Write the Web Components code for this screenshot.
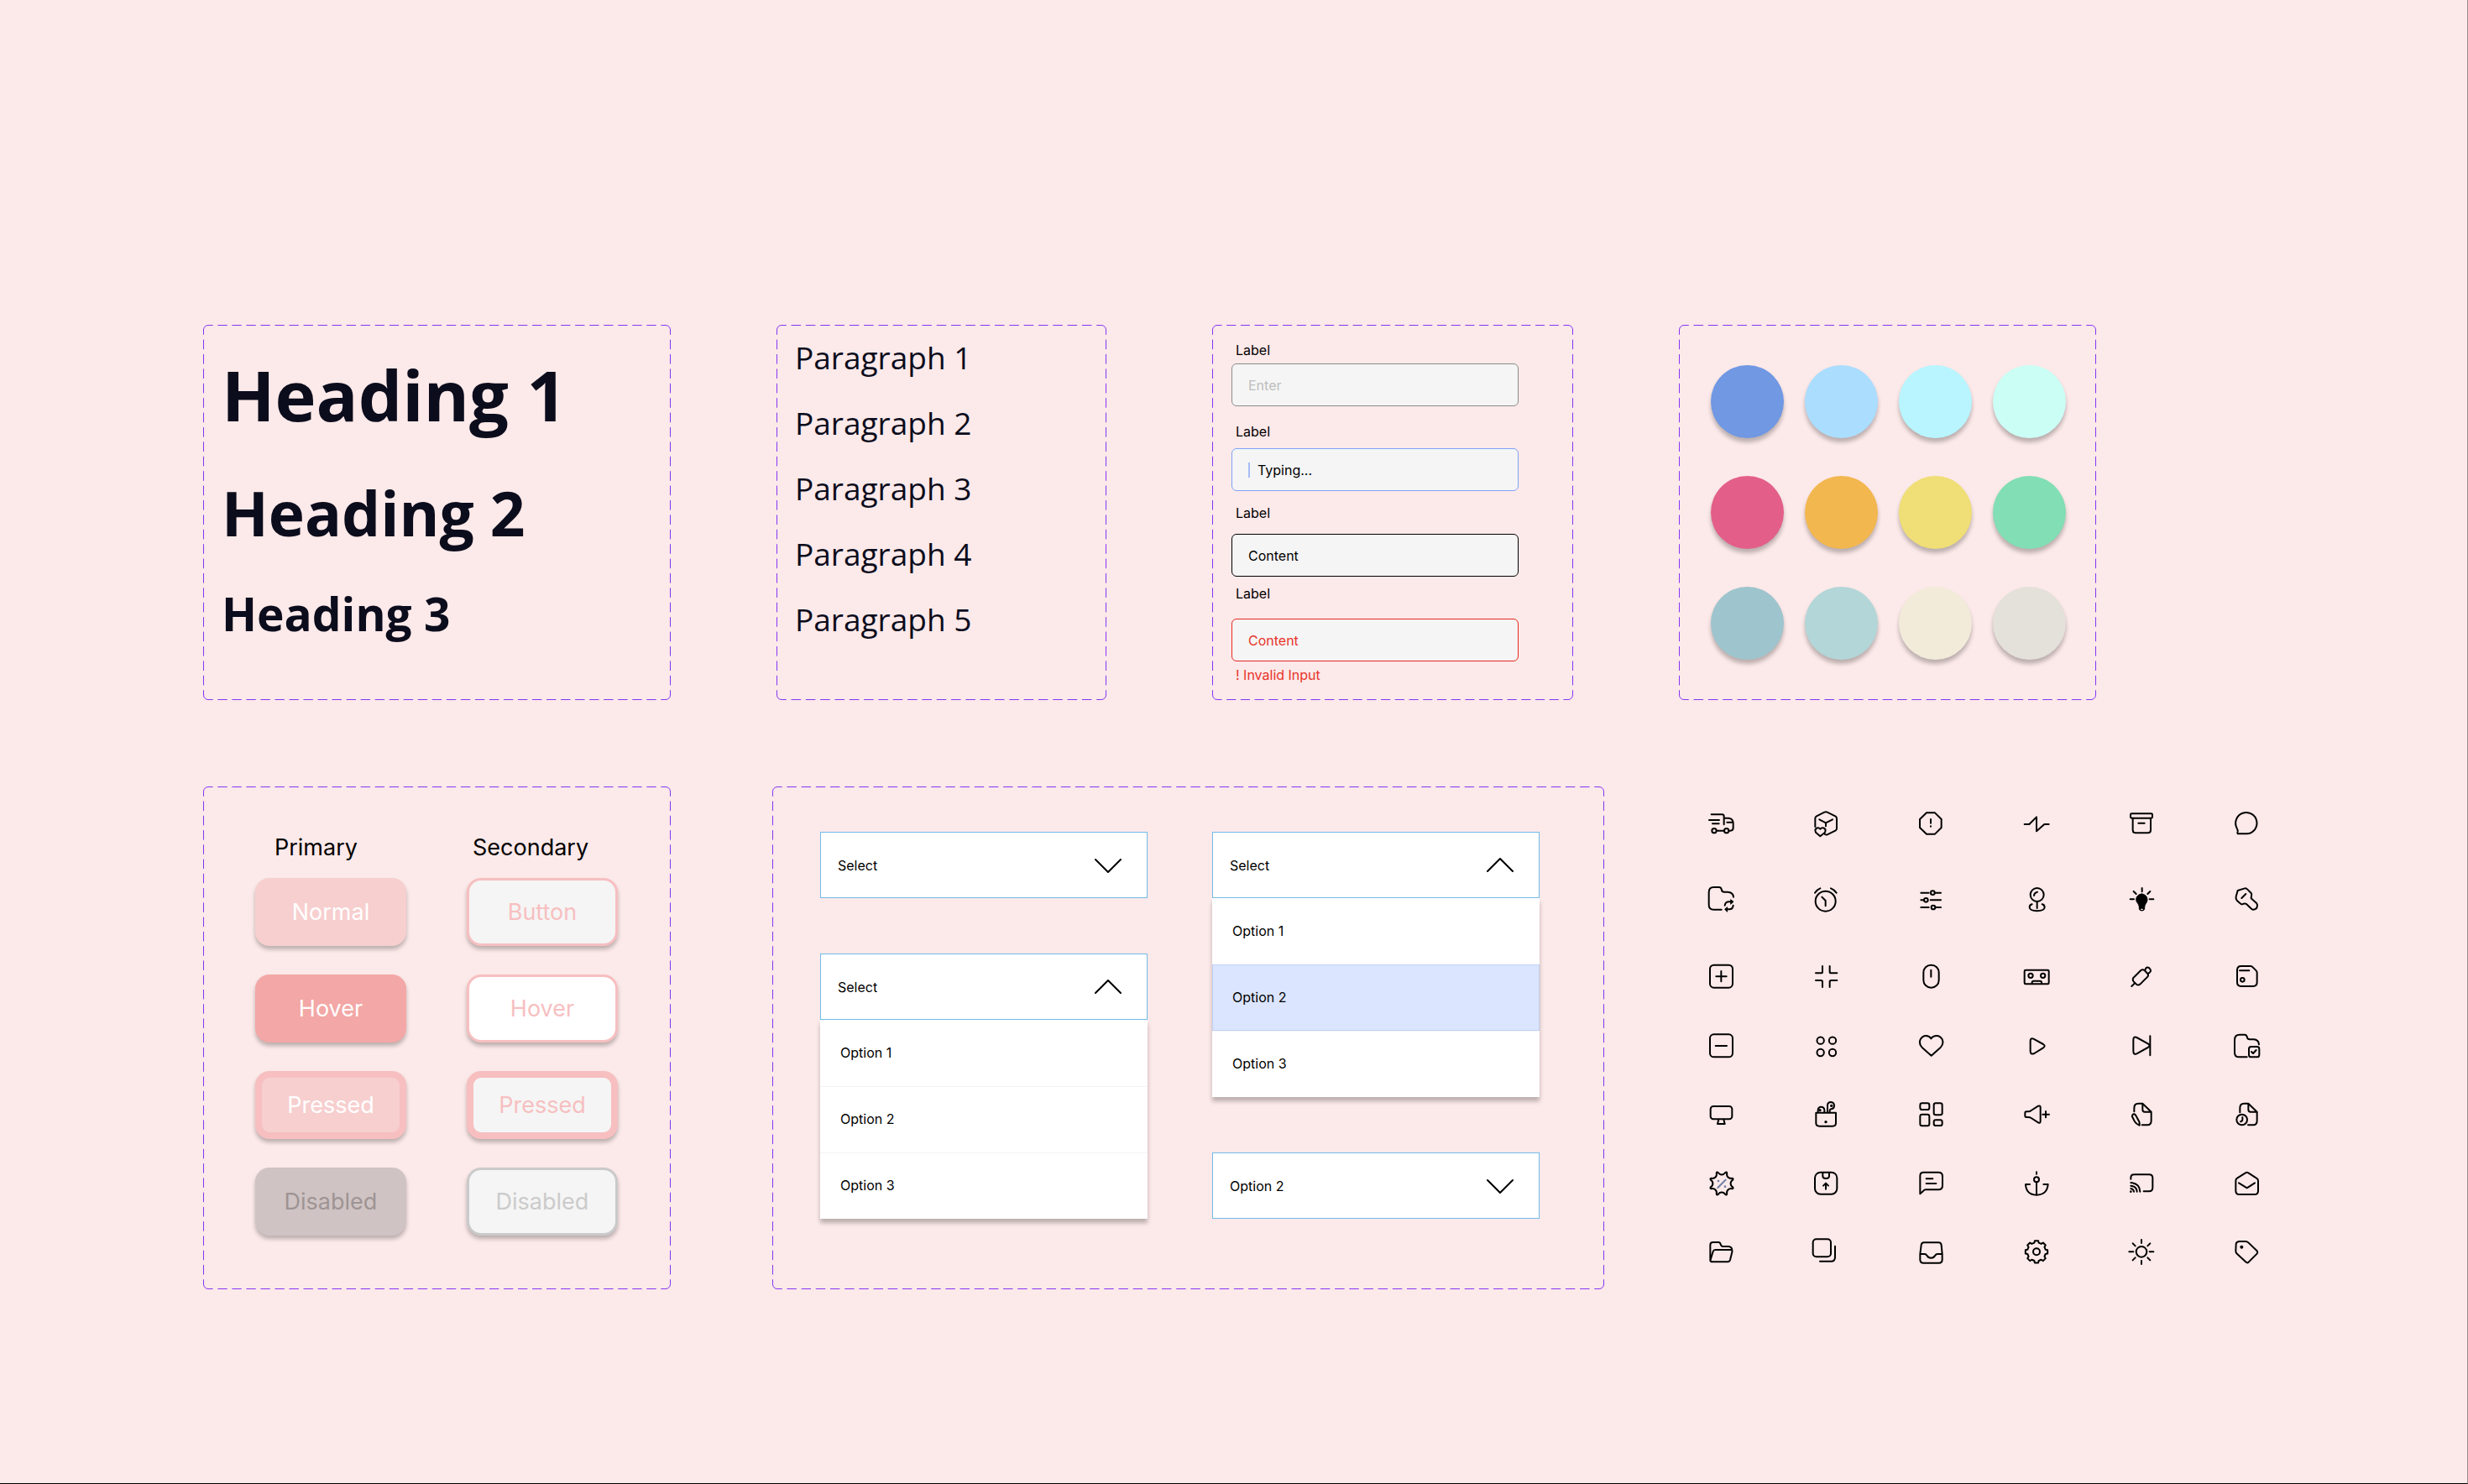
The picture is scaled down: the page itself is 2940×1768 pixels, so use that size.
<!DOCTYPE html>
<html lang="en">
<head>
<meta charset="utf-8">
<title>Style guide</title>
<style>
  html { background: #fce9e9; }
  body {
    margin: 0; box-sizing: border-box; min-height: 100vh;
    background: #fce9e9; border-right: 1px solid #978c8c; border-bottom: 1px solid #000;
    font-family: Inter, "Liberation Sans", sans-serif; color: #000;
  }
</style>
</head>
<body>
<style-guide></style-guide>
<script>
const define = (name, html, setup) => {
  const tpl = document.createElement('template');
  tpl.innerHTML = html;
  customElements.define(name, class extends HTMLElement {
    constructor() {
      super();
      this.attachShadow({ mode: 'open' }).append(tpl.content.cloneNode(true));
    }
    connectedCallback() { if (setup) setup(this, this.shadowRoot); }
  });
};

/* Panel with a dashed frame; cols/rows give the number of dashes on each side. */
define('dashed-panel', `
<style>
  :host { display: grid; grid-template: 6px 1fr 6px / 6px 1fr 6px; min-width: 0; }
  svg { display: block; width: 100%; height: 100%; fill: none; stroke: #8436f5; }
  .body { min-width: 0; }
</style>
<svg><path d="M.5 6A5.500 5.500 0 0 1 6 .5"/></svg>
<svg class="h"><line x1="0" x2="100%" y1=".5" y2=".5"/></svg>
<svg><path d="M0 .5A5.500 5.500 0 0 1 5.500 6"/></svg>
<svg class="v"><line y1="0" y2="100%" x1=".5" x2=".5"/></svg>
<div class="body"><slot></slot></div>
<svg class="v"><line y1="0" y2="100%" x1="5.500" x2="5.500"/></svg>
<svg><path d="M.5 0A5.500 5.500 0 0 0 6 5.500"/></svg>
<svg class="h"><line x1="0" x2="100%" y1="5.500" y2="5.500"/></svg>
<svg><path d="M0 5.500A5.500 5.500 0 0 0 5.500 0"/></svg>`,
(el, root) => {
  const dash = (sel, n) => root.querySelectorAll(sel + ' line').forEach(l => {
    l.setAttribute('pathLength', n * 6);
    l.setAttribute('stroke-dasharray', '4 2');
    l.setAttribute('stroke-dashoffset', '2');
  });
  dash('.h', +el.getAttribute('cols'));
  dash('.v', +el.getAttribute('rows'));
});

define('type-headings', `
<style>
  :host { display: flex; flex-direction: column; gap: 42px; padding: 24px 16px; color: #0b0c1c;
    font-family: "Open Sans", sans-serif; }
  h1, h2, h3 { margin: 0; font-weight: 700; }
  h1 { font-size: 83px; line-height: 106px; }
  h2 { font-size: 73px; line-height: 92px; }
  h3 { font-size: 55px; line-height: 64px; }
</style>
<h1>Heading 1</h1><h2>Heading 2</h2><h3>Heading 3</h3>`);

define('type-paragraphs', `
<style>
  :host { display: flex; flex-direction: column; gap: 28px; padding: 8px 16px; color: #0b0c1c;
    font-family: "Open Sans", sans-serif; font-size: 37px; line-height: 50px; }
  p { margin: 0; }
</style>
<p>Paragraph 1</p><p>Paragraph 2</p><p>Paragraph 3</p><p>Paragraph 4</p><p>Paragraph 5</p>`);

define('text-field', `
<style>
  :host { display: flex; flex-direction: column; font-size: 16px; line-height: 20px;
    --line: #8c8c8c; --ink: #000; }
  :host([state="typing"]) { --line: #7fa5f7; }
  :host([state="filled"]) { --line: #000; }
  :host([state="error"]) { --line: #e8281e; --ink: #e8342a; }
  label { padding-left: 5px; margin-bottom: var(--gap, 6px); }
  .box { display: flex; align-items: center; gap: 9px; height: 51px; box-sizing: border-box;
    padding: 0 19px; background: #f5f5f5; border: 1px solid var(--line); border-radius: 6px; }
  input { flex: 1; min-width: 0; height: 20px; padding: 0; border: 0; background: none; outline: 0;
    font: inherit; color: var(--ink); }
  input::placeholder { color: #bdbdbd; opacity: 1; }
  .caret { width: 2px; height: 18px; background: #a5bdf5; }
  .error { padding: 6px 0 0 5px; color: #e8342a; }
</style>
<label for="field">Label</label>
<div class="box"><input id="field" type="text"></div>`,
(el, root) => {
  const input = root.querySelector('input');
  input.value = el.getAttribute('value') || '';
  input.placeholder = el.getAttribute('placeholder') || '';
  if (el.getAttribute('state') === 'typing') {
    const c = document.createElement('span'); c.className = 'caret';
    input.before(c);
  }
  if (el.hasAttribute('error')) {
    const e = document.createElement('div'); e.className = 'error';
    e.textContent = el.getAttribute('error');
    root.append(e);
  }
});

define('field-list', `
<style>
  :host { display: block; padding: 14px 59px 0 17px; }
  text-field:nth-of-type(2) { --gap: 10px; margin-top: 20px; }
  text-field:nth-of-type(3) { --gap: 15px; margin-top: 16px; }
  text-field:nth-of-type(4) { --gap: 20px; margin-top: 10px; }
</style>
<text-field placeholder="Enter"></text-field>
<text-field state="typing" value="Typing..."></text-field>
<text-field state="filled" value="Content"></text-field>
<text-field state="error" value="Content" error="! Invalid Input"></text-field>`);

define('colour-palette', `
<style>
  :host { display: grid; grid-template-columns: repeat(4, 87px); gap: 45px 25px; padding: 42px 32px; }
  i { width: 87px; height: 87px; border-radius: 50%; box-shadow: 0 5px 5px rgba(0,0,0,.25); }
</style>`,
(el, root) => {
  for (const c of ['#7098e3','#abddff','#b8f5ff','#cbfff6','#e35f8a','#f3b74f','#f0de76','#82deb4',
                   '#9ec5cd','#b3d6d8','#f2ebda','#e4e0da']) {
    const i = document.createElement('i'); i.style.background = c; root.append(i);
  }
});

define('ui-button', `
<style>
  :host { display: block; }
  button { display: block; width: 180px; height: 81px; padding: 0; box-sizing: border-box;
    border: 0 solid #f7bfc0; border-radius: 17px; font-family: inherit; font-size: 27px; line-height: 34px;
    background: #f7cfcf; color: #fff; box-shadow: 0 4px 5px rgba(0,0,0,.25); }
  :host([state="hover"]) button { background: #f3a7a6; }
  :host([state="pressed"]) button { border-width: 8px; }
  :host([state="disabled"]) button { background: #cfc3c3; color: #9e9494; }
  :host([kind="secondary"]) button { background: #f5f5f5; color: #f7bfc0; border-width: 3px; }
  :host([kind="secondary"][state="hover"]) button { background: #fff; }
  :host([kind="secondary"][state="pressed"]) button { border-width: 8px; }
  :host([kind="secondary"][state="disabled"]) button { border-color: #cacaca; color: #cbcbcb; }
</style>
<button type="button"><slot></slot></button>`,
(el, root) => { root.querySelector('button').disabled = el.getAttribute('state') === 'disabled'; });

define('button-set', `
<style>
  :host { display: grid; grid-template-columns: 180px 180px; gap: 34px 72px; padding: 50px 56px; }
  h4 { margin: 0 0 -15px; font-weight: 400; font-size: 27px; line-height: 34px; padding-left: 23px; }
  h4 + h4 { padding-left: 7px; }
</style>
<h4>Primary</h4><h4>Secondary</h4>
<ui-button>Normal</ui-button><ui-button kind="secondary">Button</ui-button>
<ui-button state="hover">Hover</ui-button><ui-button kind="secondary" state="hover">Hover</ui-button>
<ui-button state="pressed">Pressed</ui-button><ui-button kind="secondary" state="pressed">Pressed</ui-button>
<ui-button state="disabled">Disabled</ui-button><ui-button kind="secondary" state="disabled">Disabled</ui-button>`);

define('drop-down', `
<style>
  :host { display: block; font-size: 16px; line-height: 20px; }
  .head { display: grid; align-items: center; }
  select, svg { grid-area: 1 / 1; }
  select { appearance: none; width: 100%; height: 79px; padding: 0 20px; margin: 0; box-sizing: border-box;
    background: #fff; border: 1px solid #72bbea; border-radius: 0; font: inherit; color: #000; }
  svg { justify-self: end; margin-right: 31px; width: 32px; height: 18px; pointer-events: none;
    fill: none; stroke: #000; stroke-width: 2; stroke-linecap: round; stroke-linejoin: round; }
  ul { list-style: none; margin: 0; padding: 0; background: #fff; box-shadow: 0 5px 5px rgba(0,0,0,.25);
    clip-path: inset(0 -10px -12px -10px); }
  li { box-sizing: border-box; height: 79px; padding: 28px 24px; border-top: 1px solid #f3f3f3; }
  li:first-child { border-top-color: #fff; }
  li[aria-selected="true"] { background: #dbe5ff; border: 1px solid #bfd1f5; padding: 28px 23px; }
</style>
<div class="head">
  <select aria-label="Select"><option>Select</option><option>Option 1</option><option>Option 2</option><option>Option 3</option></select>
  <svg viewBox="0 0 32 18"><path d="M1 2L16 17L31 2"/></svg>
</div>`,
(el, root) => {
  root.querySelector('select').value = el.getAttribute('value') || 'Select';
  if (!el.hasAttribute('open')) return;
  root.querySelector('path').setAttribute('d', 'M1 16L16 1L31 16');
  const ul = document.createElement('ul');
  ul.setAttribute('role', 'listbox');
  for (let n = 1; n <= 3; n++) {
    const li = document.createElement('li');
    li.setAttribute('role', 'option');
    li.setAttribute('aria-selected', el.getAttribute('active') == n);
    li.textContent = 'Option ' + n;
    ul.append(li);
  }
  root.append(ul);
});

define('drop-down-set', `
<style>
  :host { display: grid; grid-template-columns: 1fr 1fr; gap: 77px; padding: 48px 71px 77px 51px; }
  div { display: flex; flex-direction: column; gap: 66px; }
</style>
<div><drop-down></drop-down><drop-down open></drop-down></div>
<div><drop-down open active="2"></drop-down><drop-down value="Option 2"></drop-down></div>`);

/* Closed outlines around a centre, made of points given in polar form. */
const polar = (cx, cy, r, deg) => {
  const a = deg * Math.PI / 180;
  return (cx + r * Math.cos(a)).toFixed(1) + ' ' + (cy + r * Math.sin(a)).toFixed(1);
};
const badge = (cx, cy) => {
  let d = 'M' + polar(cx, cy, 42, 26.5);
  for (let k = 1; k <= 8; k++) {
    const a = 45 * k;
    d += 'C' + polar(cx, cy, 30, a - 13) + ' ' + polar(cx, cy, 30, a + 13) + ' ' + polar(cx, cy, 42, a + 18.5)
       + 'Q' + polar(cx, cy, 46, a + 22.5) + ' ' + polar(cx, cy, 42, a + 26.5);
  }
  return d + 'Z';
};
const gear = (cx, cy) => {
  let d = '';
  for (let k = 0; k < 8; k++) {
    const a = 45 * k;
    d += (k ? 'L' : 'M') + polar(cx, cy, 33, a - 14) + 'L' + polar(cx, cy, 40, a - 9) + 'L' + polar(cx, cy, 40, a + 9)
       + 'L' + polar(cx, cy, 33, a + 14);
  }
  return d + 'Z';
};
const p = d => `<path d="${d}"/>`;
const c = (x, y, r) => `<circle cx="${x}" cy="${y}" r="${r}"/>`;
const dot = (x, y, r) => `<circle cx="${x}" cy="${y}" r="${r}" fill="currentColor" stroke="none"/>`;
const r = (x, y, w, h, rx) => `<rect x="${x}" y="${y}" width="${w}" height="${h}" rx="${rx}"/>`;
const X = [64, 441, 816, 112, 489, 864], Y = [68, 344, 616, 53, 300, 546, 789];
const ICONS = [
  ['truck', p('M84 90H122Q129 90 129 97V126M76 110H112M88 123H111M129 103H146Q162 105 162 122V138Q162 148 152 148H149M140 118H162M104 148H128') + c(94,148,8) + c(138,148,8)],
  ['parcel', p('M457 134V104Q457 99 462 96L490 82Q495 80 500 82L529 96Q534 99 534 104V140Q534 145 529 148L500 162Q496 164 492 161M472 108L495 120L519 108M495 120V132M475 168L459 154Q454 143 463 138.5Q470 136 475 142Q480 136 488 138.5Q497 143 492 154Z')],
  ['warning', p('M855 84H885L908 107V137L885 160H855L831 137V107ZM870 107V121M870 132V133')],
  ['pulse', p('M123 125H140L166 99V150L194 125H210')],
  ['archive', r(504,87,78,16,4) + p('M512 103V146Q512 156 522 156H566Q576 156 576 146V103M532 121H554')],
  ['chat', p('M919 159H887Q884 156 887 151Q888 146 884 139A38 38 0 1 1 919 159Z')],

  ['folder sync', p('M120 433H92Q75 433 75 416V372Q75 353 92 353H112Q118 353 120 360Q121 370 130 370H142Q162 371 163 388M132 418Q134 405 148 405H158M162 418Q161 432 148 432H136') + '<path fill="currentColor" stroke-width="3" d="M154 398L163 405L154 413ZM140 425L132 432L140 440Z"/>'],
  ['alarm', c(494,403,36) + p('M481 388L494 401V420M456 373Q463 362 475 357M533 373Q526 362 513 357')],
  ['sliders', p('M835 373H863M886 373H906M835 399H846M869 399H906M835 425H863M888 425H906') + c(877,373,7) + c(853,399,7) + c(879,425,7)],
  ['joystick', c(168,380,24) + p('M157 383Q158 372 169 370M168 404V428M150 414Q141 416 141 425Q142 437 168 438Q194 437 195 425Q195 416 186 414')],
  ['bulb', '<path fill="currentColor" stroke-width="3" d="M544 377A20 20 0 0 1 564 397Q564 405 559 411Q555 416 554 424V430Q553 437 544 437Q536 437 535 430V424Q534 416 530 411Q524 405 524 397A20 20 0 0 1 544 377Z"/><path stroke="#fce9e9" stroke-width="4" d="M542 432H547"/>' + p('M545 356V369M515 368L524 377M574 368L565 377M503 396H516M572 396H586')],
  ['drumstick', p('M887 365L912 357Q917 355 921 360L935 374Q938 377 936 384L935 393L955 411Q959 416 956 424Q954 432 943 433Q939 434 936 430L918 413Q915 411 908 412L903 414Q899 415 894 409L884 400Q879 395 881 386ZM901 392L916 377')],

  ['add', r(79,630,81,81,14) + p('M101 671H138M119 652V689')],
  ['compress', p('M459 659H478Q483 659 483 654V634M509 634V654Q509 659 514 659H535M459 685H478Q483 685 483 690V709M509 709V690Q509 685 514 685H535')],
  ['mouse', r(844,630,55,81,27) + p('M871 648V672')],
  ['cassette', r(123,648,87,50,4) + c(145,668,8) + c(189,668,8) + p('M150 697V692Q150 687 156 687H178Q184 687 184 692V697')],
  ['marker', p('M514 676L541 649Q547 644 554 649L565 661Q569 666 565 672L538 699Q531 704 525 699L515 689Q510 683 514 676ZM555 650L559 641Q564 636 571 641L574 645Q578 650 574 655L567 661M508 706L520 694')],
  ['memory card', p('M899 634H933Q938 634 941 638L953 650Q956 653 956 658V692Q956 706 942 706H899Q885 706 885 692V648Q885 634 899 634ZM894 650H928') + c(904,683,7)],

  ['remove', r(79,66,81,81,14) + p('M99 107H139')],
  ['apps', c(476,88,12.5) + c(519,88,12.5) + c(476,131,12.5) + c(519,131,12.5)],
  ['heart', p('M872 142L840 114Q826 99 833 84Q840 71 853 71Q865 71 871 81Q878 71 891 71Q904 71 911 84Q918 99 904 114Z')],
  ['play', p('M144 90Q144 78 155 82L190 101Q200 107 190 114L158 134Q144 140 144 126Z')],
  ['skip', p('M514 86Q514 72 526 77L566 99Q577 106 566 113L526 135Q514 140 514 126ZM574 72V141')],
  ['folder check', p('M920 147H892Q876 147 876 130V86Q876 67 894 67H912Q918 67 920 74Q921 84 930 84H944Q962 85 963 102M936 128L942 134L953 122') + r(927,110,37,37,8)],

  ['monitor', r(81,324,77,46,10) + p('M110 371L106 387H132L128 371')],
  ['earbuds', p('M460 347H531V384Q531 395 519 395H472Q460 395 460 384ZM467 347V337Q468 326 478 326Q489 326 490 337V347M501 347V320Q502 309 513 309Q525 310 525 322Q525 333 515 334Q509 335 509 340V347') + dot(495,380,5) + dot(474,338,5) + dot(515,322,5)],
  ['dashboard', r(832,313,33,23,7) + r(881,313,30,42,7) + r(832,353,33,41,7) + r(881,373,30,20,7)],
  ['volume up', p('M130 343H137Q142 343 147 339L172 323Q180 320 180 328V378Q180 386 172 382L147 366Q142 363 137 363H130Q125 363 125 358V348Q125 343 130 343ZM188 353H211M199 342V364')],
  ['file edit', p('M517 343V330Q517 314 532 314H547L578 344V376Q578 391 564 391H545M547 314V336Q547 344 555 344H578M510 358Q511 351 517 352Q521 353 523 357L534 377Q537 383 536 392L527 387Q521 383 518 377L511 363Q509 360 510 358Z')],
  ['file clock', p('M895 346V330Q895 314 910 314H925L956 344V376Q956 391 942 391H924M925 314V336Q925 344 933 344H956M904 363V371Q904 377 897 379') + c(902,372,19)],

  ['discount', p(badge(121,600)) + '<g style="stroke:#6f7ea6;color:#6f7ea6">' + p('M107 615L135 587') + dot(109,591,4) + dot(133,611,4) + '</g>'],
  ['upload', r(456,560,79,78,20) + p('M484 561V574Q484 582 495 582Q507 582 507 574V561M495 620V600M486 608L495 599L504 608')],
  ['message', p('M832 637V572Q832 560 844 560H898Q912 560 912 574V607Q912 622 898 622H852Q847 622 843 627L832 637M854 583H877M854 600H889')],
  ['anchor', p('M166 559V566M166 595V641M142 603H127Q129 640 166 641Q204 640 207 603H191') + c(166,586,9)],
  ['cast', p('M505 584V580Q505 568 517 568H570Q583 568 583 580V615Q583 628 570 628H551M505 597Q537 600 538 629M505 608Q526 610 527 629M505 618Q515 620 516 629') + dot(505,629,4)],
  ['mail', p('M880 590Q880 584 885 581L915 562Q920 559 925 562L954 581Q960 584 960 590V626Q960 639 947 639H893Q880 639 880 626ZM891 598L920 616L948 598')],

  ['folder open', p('M80 872V820Q80 810 90 810H110Q115 810 117 817Q119 825 125 825H145Q157 826 158 837M80 876L90 843Q92 837 98 837H153Q160 838 158 845L151 873Q149 880 142 880H88Q80 880 80 872')],
  ['copy', r(449,799,64,63,12) + p('M528 824V863Q528 878 514 878H474')],
  ['inbox', p('M836 820Q837 811 846 811H898Q907 811 908 820L911 852V872Q911 884 899 884H844Q832 884 832 872V852ZM833 852H848Q853 852 857 858Q861 866 871 866Q881 866 885 858Q889 852 894 852H910')],
  ['settings', p(gear(166,844)) + c(166,844,12)],
  ['sun', c(543,844,19) + p('M543 801V813M543 876V888M499 844H514M572 844H586M512 814L521 823M574 814L565 823M512 874L521 865M574 874L565 865')],
  ['tag', p('M892 807H915Q921 807 925 811L956 841Q960 846 956 851L926 881Q921 885 917 881L883 850Q880 846 880 841L881 816Q882 808 892 807Z') + dot(901,827,6)]
];

define('icon-grid', `
<style>
  :host { display: grid; grid-template-columns: repeat(6, 36px); justify-content: space-between;
    grid-template-rows: 91px 91px 83px 82px 82px 81px 36px; padding-top: 26px; }
  svg { width: 36px; height: 36px; fill: none; stroke: currentColor; stroke-width: 6;
    stroke-linecap: round; stroke-linejoin: round; overflow: visible; }
</style>`,
(el, root) => {
  ICONS.forEach(([name, art], i) => {
    const holder = document.createElement('template');
    holder.innerHTML = `<svg role="img" aria-label="${name}" viewBox="${X[i % 6]} ${Y[Math.floor(i / 6)]} 108 108">${art}</svg>`;
    root.append(holder.content);
  });
});

define('style-guide', `
<style>
  :host { display: flex; flex-direction: column; gap: 103px; padding: 387px 0 0 242px; }
  .row { display: grid; }
  .top { grid-template-columns: 557fr 393fr 430fr 497fr; column-gap: 126px; min-height: 447px; margin-right: 442px; }
  .bottom { grid-template-columns: 557fr 991fr 662fr; column-gap: 121px; min-height: 599px; margin-right: 245px; }
</style>
<div class="row top">
  <dashed-panel cols="32" rows="25"><type-headings></type-headings></dashed-panel>
  <dashed-panel cols="22" rows="25"><type-paragraphs></type-paragraphs></dashed-panel>
  <dashed-panel cols="25" rows="25"><field-list></field-list></dashed-panel>
  <dashed-panel cols="28" rows="25"><colour-palette></colour-palette></dashed-panel>
</div>
<div class="row bottom">
  <dashed-panel cols="32" rows="34"><button-set></button-set></dashed-panel>
  <dashed-panel cols="57" rows="34"><drop-down-set></drop-down-set></dashed-panel>
  <icon-grid></icon-grid>
</div>`);
</script>
</body>
</html>
